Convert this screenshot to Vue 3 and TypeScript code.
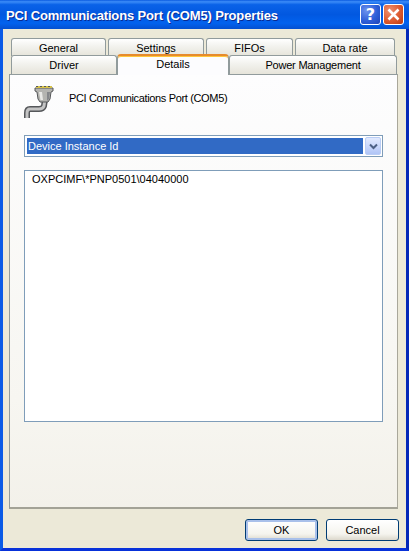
<template>
  <div class="window">
    <header class="titlebar">
      <span class="title">PCI Communications Port (COM5) Properties</span>
      <div class="caption-buttons">
        <button class="cap cap-help">?</button>
        <button class="cap cap-close" aria-label="Close">
          <svg width="15" height="15" viewBox="0 0 15 15">
            <path d="M2.5 2.5 L12.5 12.5 M12.5 2.5 L2.5 12.5" stroke="#fff" stroke-width="2.6" fill="none" />
          </svg>
        </button>
      </div>
    </header>

    <div class="client">
      <div class="tabs">
        <div class="tab-row row-back">
          <div v-for="t in backTabs" :key="t.label" class="tab" :class="t.cls">{{ t.label }}</div>
        </div>
        <div class="tab-row row-front">
          <div
            v-for="t in frontTabs"
            :key="t.label"
            class="tab"
            :class="[t.cls, { active: t.label === activeTab }]"
          >
            {{ t.label }}
          </div>
        </div>
      </div>

      <section class="panel">
        <div class="device">
          <svg class="device-icon" width="32" height="36" viewBox="0 2 32 36">
            <path d="M21 15 L20 22 Q19 25 15 25 L6 25 Q3 25 3 29 L3 34" fill="none" stroke="#55575a" stroke-width="6" />
            <path d="M21 15 L20 22 Q19 25 15 25 L6 25 Q3 25 3 29 L3 34" fill="none" stroke="#c4c4c4" stroke-width="3" />
            <path d="M11 4 L29 4 L29 7 L27 8 L26 15 L24 18 L16 18 L14 15 L13 8 L11 7 Z" fill="#b4b4b0" stroke="#56585a" stroke-width="1" />
            <path d="M15 8 L18 8 L19 16 L16.500 16 Z" fill="#e9e9e6" />
            <path d="M23 8 L26 8 L25 15 L23 17 Z" fill="#85878a" />
            <rect x="12" y="2" width="16" height="2" fill="#d6c24a" />
            <path d="M12 2 h2 v1 h-2 Z M16 2 h2 v1 h-2 Z M20 2 h2 v1 h-2 Z M24 2 h2 v1 h-2 Z" fill="#56585a" />
          </svg>
          <span class="device-name">PCI Communications Port (COM5)</span>
        </div>

        <div class="combo">
          <div class="combo-value">Device Instance Id</div>
          <div class="combo-btn">
            <svg width="9" height="7" viewBox="0 0 9 7">
              <path d="M1 1.500 L4.500 5 L8 1.500" fill="none" stroke="#4d6185" stroke-width="2" />
            </svg>
          </div>
        </div>

        <div class="listbox">OXPCIMF\*PNP0501\04040000</div>
      </section>

      <footer class="actions">
        <button class="btn btn-default">OK</button>
        <button class="btn">Cancel</button>
      </footer>
    </div>
  </div>
</template>

<script setup lang="ts">
interface Tab {
  label: string
  cls: string
}

const activeTab = 'Details'

const backTabs: Tab[] = [
  { label: 'General', cls: 'w-general' },
  { label: 'Settings', cls: 'w-settings' },
  { label: 'FIFOs', cls: 'w-fifos' },
  { label: 'Data rate', cls: 'w-rate' }
]

const frontTabs: Tab[] = [
  { label: 'Driver', cls: 'w-driver' },
  { label: 'Details', cls: 'w-details' },
  { label: 'Power Management', cls: 'w-power' }
]
</script>

<style>
html,
body {
  margin: 0;
  background: #ece9d8;
}
</style>

<style scoped>
.window {
  width: 409px;
  height: 551px;
  display: flex;
  flex-direction: column;
  box-sizing: border-box;
  overflow: hidden;
  font-family: "Liberation Sans", Arial, sans-serif;
  font-size: 11px;
  color: #000;
  background: #0831d9;
}

.titlebar {
  height: 29px;
  flex: none;
  display: flex;
  align-items: center;
  justify-content: space-between;
  padding: 0 5px 0 6px;
  background: linear-gradient(180deg, #0a5ae0 0%, #3c8cf8 6%, #0a62e8 16%, #0258e0 50%, #0262ee 80%, #0450d0 100%);
}

.title {
  margin-top: 2px;
  color: #fff;
  font-size: 13px;
  font-weight: 700;
  letter-spacing: -0.15px;
  text-shadow: 1px 1px 0 #0a2a90;
  white-space: nowrap;
}

.caption-buttons {
  display: flex;
  gap: 2px;
}

.cap {
  width: 21px;
  height: 21px;
  padding: 0;
  box-sizing: border-box;
  border: 1px solid #fff;
  border-radius: 3px;
  display: flex;
  align-items: center;
  justify-content: center;
  color: #fff;
  font-family: "DejaVu Sans", sans-serif;
  font-size: 16px;
  font-weight: 700;
}

.cap-help {
  background: radial-gradient(circle at 30% 30%, #6d93ee 0%, #2f5fd8 55%, #1d43b8 100%);
}

.cap-close {
  background: radial-gradient(circle at 30% 30%, #ee9070 0%, #dc5a30 55%, #b8380f 100%);
}

.client {
  flex: 1;
  display: flex;
  flex-direction: column;
  min-height: 0;
  padding: 9px 5px 0 6px;
  background: #ece9d8;
  border-left: 3px solid #0a5ae6;
  border-right: 3px solid #0428b8;
  border-bottom: 3px solid #0831d9;
}

.tabs {
  display: flex;
  flex-direction: column;
  padding-left: 2px;
  flex: none;
}

.tab-row {
  display: flex;
  height: 19px;
}

.row-back {
  gap: 2px;
  height: 17px;
}

.tab {
  box-sizing: border-box;
  border: 1px solid #919b9c;
  border-bottom: none;
  border-radius: 3px 3px 0 0;
  background: linear-gradient(180deg, #fff 0%, #f3f3ef 40%, #e6e4da 100%);
  text-align: center;
  line-height: 18px;
  white-space: nowrap;
}

.row-front .tab {
  height: 19px;
  line-height: 19px;
}

.row-back .tab {
  height: 18px;
}

.w-general { width: 95px; }
.w-settings { width: 96px; }
.w-fifos { width: 87px; }
.w-rate { width: 100px; }
.w-driver { width: 106px; }
.w-details { width: 112px; }
.w-power { width: 168px; letter-spacing: -0.2px; }

.row-front .tab.active {
  position: relative;
  z-index: 2;
  height: 21px;
  margin-top: -1px;
  margin-bottom: -1px;
  border-top: 2px solid #e68b2c;
  border-radius: 4px 4px 0 0;
  box-shadow: inset 0 1px 0 #ffc73c;
  background: #fcfcfe;
  line-height: 17px;
}

.panel {
  box-sizing: border-box;
  width: 389px;
  height: 435px;
  flex: none;
  border: 1px solid #919b9c;
  border-right-color: #a9a79a;
  border-bottom: 2px solid #a3a296;
  background: linear-gradient(180deg, #fdfdfe 0%, #f7f6f1 75%, #f3f1ea 100%);
  padding: 11px 14px 0 14px;
}

.device {
  display: flex;
  align-items: center;
  gap: 13px;
  height: 36px;
}

.device-icon {
  flex: none;
}

.device-name {
  margin-top: -12px;
  letter-spacing: -0.35px;
}

.combo {
  margin-top: 13px;
  height: 22px;
  box-sizing: border-box;
  border: 1px solid #7f9db9;
  background: #fff;
  display: flex;
  align-items: center;
  padding: 1px 1px 1px 2px;
  gap: 2px;
}

.combo-value {
  flex: 1;
  height: 16px;
  line-height: 17px;
  background: #316ac5;
  color: #fff;
  padding-left: 1px;
}

.combo-btn {
  flex: none;
  width: 16px;
  height: 18px;
  box-sizing: border-box;
  border: 1px solid #bacdf5;
  border-radius: 2px;
  background: linear-gradient(180deg, #e2eafe 0%, #c6d5fb 60%, #b0c5f6 100%);
  display: flex;
  align-items: center;
  justify-content: center;
}

.listbox {
  margin-top: 13px;
  height: 252px;
  box-sizing: border-box;
  border: 1px solid #7f9db9;
  background: #fff;
  padding: 1px 7px;
  line-height: 15px;
}

.actions {
  display: flex;
  justify-content: flex-end;
  gap: 8px;
  margin-top: 10px;
  margin-right: 2px;
}

.btn {
  width: 73px;
  height: 22px;
  padding: 0;
  box-sizing: border-box;
  border: 1px solid #003c74;
  border-radius: 3px;
  background: linear-gradient(180deg, #fff 0%, #f5f4ee 70%, #dcd8cc 100%);
  font: inherit;
  color: #000;
}

.btn-default {
  box-shadow: inset 0 0 0 2px #a9c0ea;
}
</style>
